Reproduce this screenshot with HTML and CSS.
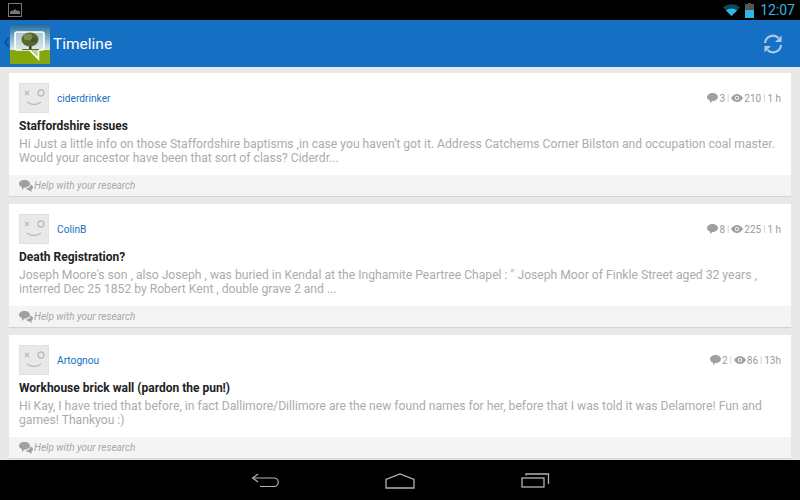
FILE: index.html
```html
<!DOCTYPE html>
<html lang="en">
<head>
    <meta charset="UTF-8">
    <title>Timeline</title>
    <link rel="stylesheet" href="styles.css">
</head>
<body>
    <div class="screen">
        <div class="status-bar">
            <svg class="pic-icon" width="14" height="14" viewBox="0 0 14 14">
                <rect x="0.5" y="0.5" width="13" height="13" fill="none" stroke="#777"/>
                <path d="M2 11V9l2-2 1 1 2-2 2 2 1-1 2 2v2z" fill="#777"/>
            </svg>
            <div class="status-right">
                <svg width="17" height="12" viewBox="0 0 17 12">
                    <path d="M0 3.500C4.500-1 12.500-1 17 3.500L8.500 12z" fill="#0e4a5e"/>
                    <path d="M3 6.500C6 3.800 11 3.800 14 6.500L8.500 12z" fill="#33b5e5"/>
                </svg>
                <svg width="9" height="15" viewBox="0 0 9 15">
                    <rect x="3" y="0" width="3" height="2" fill="#555"/>
                    <rect x="0" y="1" width="9" height="6" fill="#555"/>
                    <rect x="0" y="7" width="9" height="8" fill="#33b5e5"/>
                </svg>
                <span class="clock">12:07</span>
            </div>
        </div>

        <div class="action-bar">
            <span class="back-caret">‹</span>
            <svg class="logo" width="40" height="40" viewBox="0 0 40 40">
                <defs>
                    <linearGradient id="sky" x1="0" y1="0" x2="0" y2="1">
                        <stop offset="0" stop-color="#1d6a9e"/>
                        <stop offset="1" stop-color="#e4eef2"/>
                    </linearGradient>
                </defs>
                <rect width="40" height="27" fill="url(#sky)"/>
                <rect y="26" width="40" height="14" fill="#84a80c"/>
                <path d="M7 8h25a2 2 0 0 1 2 2v14a2 2 0 0 1-2 2h-3.500v9l-9-9H7a2 2 0 0 1-2-2V10a2 2 0 0 1 2-2z" fill="#dfe8ea" fill-opacity="0.6" stroke="#fff" stroke-width="1.600"/>
                <rect x="19" y="20" width="2.500" height="6" fill="#443a22"/>
                <path d="M12 25.500h17" stroke="#5a6a2c" stroke-width="1"/>
                <ellipse cx="20" cy="15.500" rx="8.500" ry="7" fill="#56682c"/>
                <ellipse cx="18" cy="13" rx="4.500" ry="3.200" fill="#7f8c50"/>
                <ellipse cx="24" cy="16" rx="3" ry="2.500" fill="#46562a"/>
            </svg>
            <span class="title">Timeline</span>
            <svg class="refresh" width="20" height="20" viewBox="0 0 20 20" fill="none" stroke="#a9cbe9" stroke-width="2.200">
                <path d="M2 9a8 8 0 0 1 13.500-5"/>
                <path d="M18 11a8 8 0 0 1-13.500 5"/>
                <path d="M18.500 1.500v6.500h-6.500z" fill="#a9cbe9" stroke="none"/>
                <path d="M1.500 18.500v-6.500h6.500z" fill="#a9cbe9" stroke="none"/>
            </svg>
        </div>

        <div class="timeline">
            <div class="card">
                <div class="card-body">
                    <div class="card-head">
                        <svg class="avatar" viewBox="0 0 30 30"><use href="#face"/></svg>
                        <a class="username">ciderdrinker</a>
                        <div class="stats">
                            <svg width="11" height="10" viewBox="0 0 11 10"><use href="#bubble"/></svg>
                            <span>3</span><span class="sep">|</span>
                            <svg width="12" height="8" viewBox="0 0 12 8"><use href="#eye"/></svg>
                            <span>210</span><span class="sep">|</span>
                            <span>1 h</span>
                        </div>
                    </div>
                    <h3>Staffordshire issues</h3>
                    <p>Hi Just a little info on those Staffordshire baptisms ,in case you haven't got it. Address Catchems Corner Bilston and occupation coal master. Would your ancestor have been that sort of class? Ciderdr...</p>
                </div>
                <div class="card-foot">
                    <svg width="14" height="12" viewBox="0 0 14 12"><use href="#chat"/></svg>
                    <span>Help with your research</span>
                </div>
            </div>

            <div class="card">
                <div class="card-body">
                    <div class="card-head">
                        <svg class="avatar" viewBox="0 0 30 30"><use href="#face"/></svg>
                        <a class="username">ColinB</a>
                        <div class="stats">
                            <svg width="11" height="10" viewBox="0 0 11 10"><use href="#bubble"/></svg>
                            <span>8</span><span class="sep">|</span>
                            <svg width="12" height="8" viewBox="0 0 12 8"><use href="#eye"/></svg>
                            <span>225</span><span class="sep">|</span>
                            <span>1 h</span>
                        </div>
                    </div>
                    <h3>Death Registration?</h3>
                    <p>Joseph Moore's son , also Joseph , was buried in Kendal at the Inghamite Peartree Chapel : " Joseph Moor of Finkle Street aged 32 years , interred Dec 25 1852 by Robert Kent , double grave 2 and ...</p>
                </div>
                <div class="card-foot">
                    <svg width="14" height="12" viewBox="0 0 14 12"><use href="#chat"/></svg>
                    <span>Help with your research</span>
                </div>
            </div>

            <div class="card">
                <div class="card-body">
                    <div class="card-head">
                        <svg class="avatar" viewBox="0 0 30 30"><use href="#face"/></svg>
                        <a class="username">Artognou</a>
                        <div class="stats">
                            <svg width="11" height="10" viewBox="0 0 11 10"><use href="#bubble"/></svg>
                            <span>2</span><span class="sep">|</span>
                            <svg width="12" height="8" viewBox="0 0 12 8"><use href="#eye"/></svg>
                            <span>86</span><span class="sep">|</span>
                            <span>13h</span>
                        </div>
                    </div>
                    <h3>Workhouse brick wall (pardon the pun!)</h3>
                    <p>Hi Kay, I have tried that before, in fact Dallimore/Dillimore are the new found names for her, before that I was told it was Delamore! Fun and games! Thankyou :)</p>
                </div>
                <div class="card-foot">
                    <svg width="14" height="12" viewBox="0 0 14 12"><use href="#chat"/></svg>
                    <span>Help with your research</span>
                </div>
            </div>
        </div>

        <div class="nav-bar">
            <svg width="28" height="15" viewBox="0 0 28 15" fill="none" stroke="#b4b4b4" stroke-width="1.200">
                <path d="M7 1L1.500 5 7 9"/>
                <path d="M2 5h21a4 4 0 0 1 0 8.500H9"/>
            </svg>
            <svg width="30" height="16" viewBox="0 0 30 16" fill="none" stroke="#b4b4b4" stroke-width="1.300">
                <path d="M1 15V6.500L15 1l14 5.500V15z"/>
            </svg>
            <svg width="29" height="15" viewBox="0 0 29 15" fill="none" stroke="#b4b4b4" stroke-width="1.300">
                <rect x="1" y="5" width="22" height="9"/>
                <path d="M5 2.500V1h22.500v10"/>
            </svg>
        </div>
    </div>

    <svg class="sprites" width="0" height="0">
        <symbol id="face" viewBox="0 0 30 30">
            <rect width="30" height="30" fill="#e9e9e9"/>
            <path d="M6 8l4 4M10 8l-4 4" stroke="#bcbcbc" stroke-width="1.300" fill="none"/>
            <circle cx="22" cy="10" r="3" stroke="#bcbcbc" stroke-width="1.300" fill="none"/>
            <path d="M8 19q7 5 14 0" stroke="#bcbcbc" stroke-width="1.400" fill="none"/>
        </symbol>
        <symbol id="bubble" viewBox="0 0 11 10">
            <path d="M5.500 0C8.500 0 11 1.700 11 4s-2.500 4-5.500 4L3 10V7.500C1 7 0 5.500 0 4 0 1.700 2.500 0 5.500 0z" fill="#a0a0a0"/>
        </symbol>
        <symbol id="eye" viewBox="0 0 12 8">
            <path d="M0 4C2 1 4 0 6 0s4 1 6 4c-2 3-4 4-6 4S2 7 0 4z" fill="#a0a0a0"/>
            <circle cx="6" cy="4" r="2.200" fill="#f2f2f2"/>
            <circle cx="6" cy="4" r="1.200" fill="#a0a0a0"/>
        </symbol>
        <symbol id="chat" viewBox="0 0 14 12">
            <path d="M5.500 0C8.500 0 11 1.600 11 3.800S8.500 7.500 5.500 7.500L3 10V7C1 6.500 0 5.200 0 3.800 0 1.600 2.500 0 5.500 0z" fill="#a0a0a0"/>
            <path d="M11.500 4.500c1.500.5 2.500 1.500 2.500 2.700 0 1-.6 1.800-1.500 2.300V12l-2.300-1.800c-1.500 0-2.700-.5-3.400-1.400 2.500-.2 4.700-2 4.700-4.300z" fill="#a0a0a0"/>
        </symbol>
    </svg>
</body>
</html>
```

FILE: styles.css
```css
html, body { margin: 0; padding: 0; }
body { font-family: Roboto, "Liberation Sans", sans-serif; background: #e8e8e8; }
.screen { width: 800px; height: 500px; display: flex; flex-direction: column; overflow: hidden; }
.sprites { display: block; height: 0; }

.status-bar { height: 20px; background: #000; display: flex; align-items: center; justify-content: space-between; padding: 0 5px 0 8px; flex: none; }
.status-right { display: flex; align-items: center; gap: 5px; }
.clock { color: #33b5e5; font-size: 14px; margin-left: 1px; }

.action-bar { height: 47px; background: #1570c4; display: flex; align-items: center; flex: none; padding: 1px 17px 0 10px; box-sizing: border-box; position: relative; }
.back-caret { position: absolute; left: 3px; top: 9px; color: #0e4f8e; font-size: 24px; line-height: 24px; }
.logo { position: relative; margin-top: -1px; }
.title { color: #fff; font-size: 15.500px; margin-left: 3px; flex: 1; }

.timeline { flex: 1; padding: 6px 9px 0; display: flex; flex-direction: column; gap: 7px; overflow: hidden; }
.card { background: #fff; border-bottom: 1px solid #d4d4d4; height: 124px; flex: none; display: flex; flex-direction: column; box-sizing: border-box; }
.card-body { flex: 1; padding: 10px 10px 0; }
.card-head { display: flex; align-items: center; height: 30px; }
.avatar { width: 30px; height: 30px; outline: 1px solid #e0e0e0; outline-offset: -1px; }
.username { color: #1570c4; font-size: 10.200px; margin-left: 8px; flex: 1; }
.stats { display: flex; align-items: center; color: #9a9a9a; font-size: 10px; gap: 1px; }
.sep { color: #c4c4c4; font-size: 9px; margin: 0 1px; }

h3 { margin: 5px 0 0; font-size: 12px; line-height: 16px; font-weight: 700; color: #222; }
p { margin: 3px 0 0; font-size: 12.150px; line-height: 14px; color: #acacac; }

.card-foot { height: 21px; background: #f4f4f4; display: flex; align-items: center; padding: 0 10px; gap: 1px; flex: none; }
.card-foot span { color: #a8a8a8; font-size: 10px; font-style: italic; }

.nav-bar { height: 40px; background: #000; flex: none; display: flex; align-items: center; justify-content: center; gap: 106px; padding-top: 1px; box-sizing: border-box; }
```
